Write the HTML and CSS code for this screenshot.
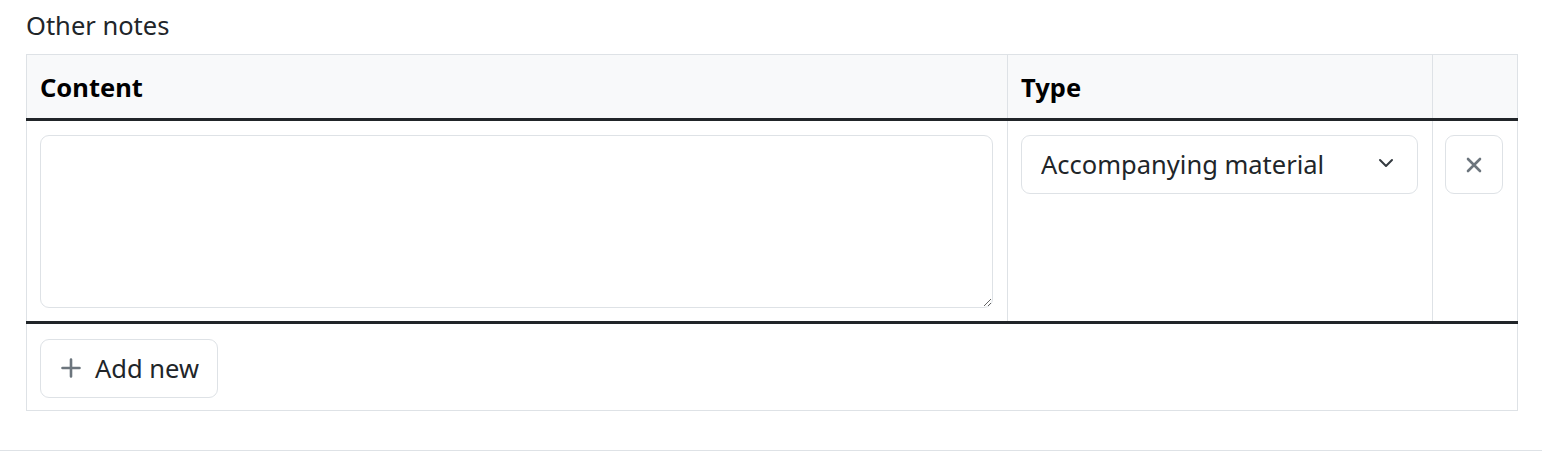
FILE: index.html
```html
<!DOCTYPE html>
<html lang="en">
<head>
    <meta charset="UTF-8">
    <meta name="viewport" content="width=device-width, initial-scale=1.0">
    <title>Other notes</title>
    <link rel="stylesheet" href="styles.css">
</head>
<body>

    <div class="section">
        <label class="form-label">Other notes</label>

        <table class="notes-table">
            <colgroup>
                <col class="col-content">
                <col class="col-type">
                <col class="col-actions">
            </colgroup>
            <thead>
                <tr>
                    <th>Content</th>
                    <th>Type</th>
                    <th></th>
                </tr>
            </thead>
            <tbody class="group-divider">
                <tr>
                    <td><textarea class="form-control"></textarea></td>
                    <td>
                        <div class="select-wrap">
                            <select class="form-select">
                                <option>Accompanying material</option>
                            </select>
                            <svg class="chevron" viewBox="0 0 16 16" width="16" height="16">
                                <path d="M2 5l6 6 6-6" fill="none" stroke="#343a40" stroke-width="2" stroke-linecap="round" stroke-linejoin="round"/>
                            </svg>
                        </div>
                    </td>
                    <td class="actions">
                        <button class="btn btn-icon" title="Remove">
                            <svg viewBox="0 0 16 16" width="16" height="16">
                                <path d="M2 2l12 12M14 2L2 14" fill="none" stroke="#6c757d" stroke-width="2.6" stroke-linecap="round"/>
                            </svg>
                        </button>
                    </td>
                </tr>
            </tbody>
            <tfoot class="group-divider">
                <tr>
                    <td colspan="3">
                        <button class="btn btn-add">
                            <svg viewBox="0 0 20 20" width="20" height="20">
                                <path d="M10 1.5v17M1.5 10h17" fill="none" stroke="#6c757d" stroke-width="2.6" stroke-linecap="round"/>
                            </svg>
                            Add new
                        </button>
                    </td>
                </tr>
            </tfoot>
        </table>
    </div>

</body>
</html>
```

FILE: styles.css
```css
/* General */
body {
    margin: 0;
    font-family: "Noto Sans", "Open Sans", sans-serif;
    font-size: 25.5px;
    line-height: 36px;
    color: #212529;
    background: #fff;
}

.section {
    padding: 7px 24px 39px 26px;
    border-bottom: 1px solid #dee2e6;
}

.form-label {
    display: block;
    margin-bottom: 11px;
}

/* Table */
.notes-table {
    width: 100%;
    table-layout: fixed;
    border-collapse: collapse;
    border: 1px solid #dee2e6;
}

.col-type {
    width: 425px;
}

.col-actions {
    width: 85px;
}

.notes-table th,
.notes-table td {
    padding: 14px 14px 13px 13px;
    text-align: left;
    vertical-align: top;
    border-left: 1px solid #dee2e6;
}

.notes-table th {
    background: #f8f9fa;
    font-weight: bold;
    color: #000;
    padding-top: 14px;
    padding-bottom: 13px;
}

.notes-table td.actions {
    padding-left: 12px;
    padding-right: 12px;
}

.group-divider td {
    border-top: 3px solid #212529;
}

/* Inputs */
.form-control {
    display: block;
    box-sizing: border-box;
    width: 100%;
    height: 173px;
    border: 1px solid #dee2e6;
    border-radius: 9px;
    font: inherit;
    padding: 9px 18px;
}

.select-wrap {
    position: relative;
}

.form-select {
    display: block;
    box-sizing: border-box;
    width: 100%;
    height: 59px;
    appearance: none;
    border: 1px solid #dee2e6;
    border-radius: 9px;
    background: #fff;
    font: inherit;
    color: #212529;
    padding: 0 60px 2px 19px;
}

.chevron {
    position: absolute;
    right: 24px;
    top: 20px;
    pointer-events: none;
}

/* Buttons */
.btn {
    box-sizing: border-box;
    height: 59px;
    border: 1px solid #dee2e6;
    border-radius: 9px;
    background: #fff;
    font: inherit;
    color: #212529;
    cursor: pointer;
}

.btn-icon {
    width: 58px;
    display: flex;
    align-items: center;
    justify-content: center;
    padding: 0;
}

.btn-add {
    display: flex;
    align-items: center;
    gap: 14px;
    padding: 0 18px 2px 20px;
}

.notes-table tfoot td {
    padding-top: 15px;
    padding-bottom: 12px;
}
```
